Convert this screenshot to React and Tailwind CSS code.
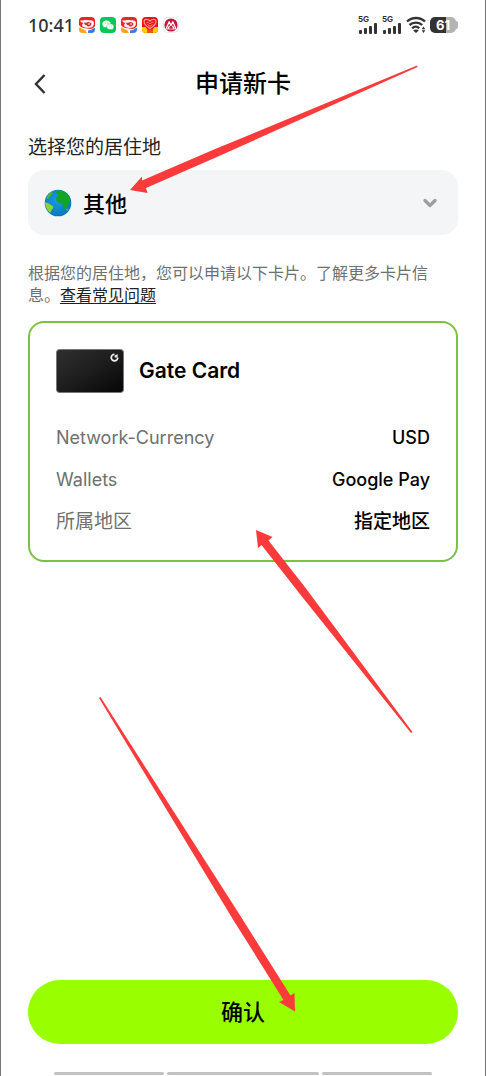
import { useState } from 'react';
import { ChevronDown } from 'lucide-react';

const REGIONS = ['其他'];

const CARD_DETAILS = [
    { label: 'Network-Currency', value: 'USD' },
    { label: 'Wallets', value: 'Google Pay' },
    { label: '所属地区', value: '指定地区', large: true },
];

function ShoppingIcon() {
    return (
        <svg viewBox="0 0 16 16" className="size-4">
            <rect width="16" height="16" rx="4" fill="#e3282b" />
            <path d="M0 8C2 11 5 11 8 11.500S13 13 16 9v3a4 4 0 0 1-4 4H4a4 4 0 0 1-4-4z" fill="#fff" />
            <path d="M0 10.500c2 0 4 2 6.500 3L8 16H4a4 4 0 0 1-4-4z" fill="#f9a51b" />
            <path d="M9 13.500c2 0 4-1 7-3V12a4 4 0 0 1-4 4H9z" fill="#3a7fd5" />
            <path d="M1 3.500c3 .2 4-.8 7-.5s4 0 6.500 1.200c1 1.800.4 4.800-1.500 6C10 11.500 5 11 3.500 9.500 2.500 8 3.500 6.500 4.500 6 3 6 1.500 5 1 3.500z" fill="#fbeeee" />
            <path d="M5 5.500c2 1 3-1 5-.5 1.500.5 2 1 2.500 2-.5 2-2 2.500-3.500 2.500-1 0-1-1.500-2-1.500S5.500 7.500 5 5.500z" fill="#c4393d" />
            <circle cx="10" cy="7" r=".8" fill="#fff" />
        </svg>
    );
}

function ChatIcon() {
    return (
        <svg viewBox="0 0 16 16" className="size-4">
            <rect width="16" height="16" rx="4" fill="#06c755" />
            <path d="M6.500 3.500c-2.400 0-4.200 1.500-4.200 3.400 0 1.100.6 2 1.500 2.600l-.4 1.300 1.600-.8c.5.100 1 .2 1.500.2 2.400 0 4.200-1.500 4.200-3.300S8.900 3.500 6.500 3.500z" fill="#fff" />
            <path d="M10.300 6.800c-2 0-3.600 1.300-3.600 2.900s1.600 2.900 3.600 2.900c.5 0 .9-.1 1.300-.2l1.300.7-.3-1.100c.8-.5 1.300-1.400 1.300-2.300 0-1.600-1.600-2.900-3.600-2.900z" fill="#fff" stroke="#06c755" strokeWidth=".5" />
            <g fill="#06c755">
                <circle cx="5.200" cy="6" r=".5" />
                <circle cx="7.900" cy="6" r=".5" />
                <circle cx="9.200" cy="9" r=".4" />
                <circle cx="11.500" cy="9" r=".4" />
            </g>
        </svg>
    );
}

function HeartIcon() {
    return (
        <svg viewBox="0 0 16 16" className="size-4">
            <rect width="16" height="16" rx="4" fill="#ee1111" />
            <path d="M0 10h3.500l2 2.500V16H4a4 4 0 0 1-4-4zM16 10h-3.500l-2 2.500V16H12a4 4 0 0 0 4-4z" fill="#fdd000" />
            <path d="M5 12.500h6V16H5z" fill="#e8590c" />
            <path d="M8 11.500C4 9 2 7 2 4.500 2 2 5.500 1.500 8 4c2.500-2.500 6-2 6 .5C14 7 12 9 8 11.500z" fill="none" stroke="#ff9d9d" strokeWidth="1.200" />
            <path d="M4.500 5.500c1.500-.5 2.500.5 3.500 1.500 1-1 2-2 3.500-1.500M5.500 7.500L8 9.300l2.500-1.800" fill="none" stroke="#ff9d9d" strokeWidth=".9" />
        </svg>
    );
}

function BankIcon() {
    return (
        <svg viewBox="0 0 16 16" className="size-4">
            <rect x=".5" y=".5" width="15" height="15" rx="4" fill="#fff" stroke="#f6e6ea" />
            <circle cx="8" cy="8" r="6.600" fill="#c8153c" />
            <path d="M3.300 11.200L6.200 4.800 8 8.500l1.800-3.700 2.900 6.400M5.300 11.300l1-2M10.700 11.300l-1-2" fill="none" stroke="#fff" strokeWidth="1.300" strokeLinecap="round" strokeLinejoin="round" />
            <path d="M3 12h10" stroke="#fff" strokeWidth=".8" />
        </svg>
    );
}

function Signal() {
    return (
        <div className="flex w-5 flex-col items-start">
            <span className="text-[8px] leading-[7px] font-bold">5G</span>
            <svg viewBox="0 0 20 11" className="h-[11px] w-5" fill="currentColor">
                <rect x="1" y="7" width="3" height="4" rx="1" />
                <rect x="6" y="5" width="3" height="6" rx="1" />
                <rect x="11" y="3" width="3" height="8" rx="1" />
                <rect x="16" y="0" width="3" height="11" rx="1" />
            </svg>
        </div>
    );
}

function StatusBar() {
    return (
        <div className="flex h-[50px] items-center justify-between text-[#333]">
            <div className="flex items-center gap-[5px]">
                <span className="font-[Noto_Sans,sans-serif] text-lg font-medium">10:41</span>
                <ShoppingIcon />
                <ChatIcon />
                <ShoppingIcon />
                <HeartIcon />
                <BankIcon />
            </div>
            <div className="flex items-center gap-1">
                <Signal />
                <Signal />
                <svg viewBox="0 0 20 18" className="h-[18px] w-5" fill="none" stroke="currentColor" strokeWidth="2.400">
                    <path d="M1 5.500C6 .8 14 .8 19 5.500M3.500 9C7 5.800 13 5.800 16.200 9M6.200 12.300c2-2 5-2 7 0" />
                    <path d="M10 17l-2.800-2.500c1.600-1.200 4-1.200 5.600 0z" fill="currentColor" stroke="none" />
                    <path d="M17.500 10.500l1.800 2.700h-3.600zM17.500 17l1.800-2.700h-3.600z" fill="currentColor" stroke="none" />
                </svg>
                <div className="flex items-center">
                    <div className="flex h-4 w-[26px] items-center justify-center rounded-[5px] bg-linear-to-r from-[#333] from-60% to-[#b3b3b3] to-60% text-[13px] leading-4 font-bold text-white">
                        61
                    </div>
                    <div className="h-2 w-0.5 rounded-r-sm bg-[#b3b3b3]" />
                </div>
            </div>
        </div>
    );
}

function Globe() {
    return (
        <svg viewBox="0 0 28 28" className="size-7">
            <defs>
                <radialGradient id="sea" cx=".45" cy=".4" r=".6">
                    <stop offset="0" stopColor="#199be2" />
                    <stop offset="1" stopColor="#0878bd" />
                </radialGradient>
            </defs>
            <circle cx="14" cy="14" r="13.300" fill="url(#sea)" />
            <path d="M12 3.500c1-1.500 3-2.500 5-2.300 4 1 7.500 4 9 7.600.5 2-.2 4.200-1.200 5.200-.5 2.500-2.300 5.500-4.300 6-1.500-.5-1-3-1.800-5-.8-1.200-2.700-.6-4.200-1.200-2-1-3-3-2.300-5 .3-1.300 1.800-1.800 2.300-2.800-.8-.8-2-1.500-2.500-2.500z" fill="#12a329" />
            <path d="M2.500 8.500C3.500 6 5.500 4 8 2.800c1 .6.500 2-.6 3C6.500 7.500 5.500 9 4 10c-1 .5-1.800-.3-1.500-1.500z" fill="#4db52f" />
            <path d="M1 13.500c1.800-.3 3.600.6 5 2 1.800.8 3.500 1.400 3.200 3-.6 1.800-2 2.500-2.200 4.200-.5 1-1.200 1-1.800.2-2.500-2.500-4-5.700-4.200-9.400z" fill="#8bd436" />
            <path d="M22 20.500c1 0 1.200-1 1.800-1.500l-.5 3z" fill="#7fd63a" />
        </svg>
    );
}

function BankCard() {
    return (
        <svg viewBox="0 0 68 44" className="h-11 w-[68px]">
            <defs>
                <linearGradient id="plate" x1="0" y1="0" x2="1" y2="1">
                    <stop offset="0" stopColor="#303030" />
                    <stop offset=".5" stopColor="#1d1d1d" />
                    <stop offset="1" stopColor="#050505" />
                </linearGradient>
            </defs>
            <rect x=".5" y=".5" width="67" height="43" rx="3" fill="url(#plate)" stroke="#777" />
            <path d="M58.500 5.300a3.300 3.300 0 1 0 3.300 3.300" fill="none" stroke="#eee" strokeWidth="1.700" />
            <path d="M58.600 8.600V6.800l3-1.800v3.600z" fill="#eee" />
        </svg>
    );
}

function Arrows() {
    return (
        <svg viewBox="0 0 486 1076" className="pointer-events-none absolute top-0 -left-px w-[calc(100%+2px)]" fill="#fb3b3b">
            <path d="M130 190L142 176.500v4L214.500 149.300 417 65.500l.5 1.500L217.500 156.700 146 188l1.500 5z" />
            <path d="M256 530l16.500 7-4 3.500L306 588.500 412.500 732l-1.500 1L299.500 593.500 261.500 545l-3.500 3z" />
            <path d="M295 1011.500l-16-9.500 4.500-2L233 919.400 99 698l1.500-1L240 915.200 290.500 995.500l4-2.500z" />
        </svg>
    );
}

export default function App() {
    const [region, setRegion] = useState(REGIONS[0]);

    return (
        <div className="relative flex min-h-screen flex-col border-x border-[#777] bg-white px-[27px] font-[Inter,'Noto_Sans_CJK_SC',sans-serif] text-black">
            <StatusBar />

            <header className="grid h-[68px] grid-cols-[28px_1fr_28px] items-center">
                <button type="button" aria-label="返回" className="flex h-10 items-center pl-1.5 text-[#333]">
                    <svg viewBox="0 0 12 20" className="h-5 w-3" fill="none" stroke="currentColor" strokeWidth="2.500">
                        <path d="M10.500 1L2 10l8.500 9" />
                    </svg>
                </button>
                <h1 className="text-center text-2xl font-medium">申请新卡</h1>
            </header>

            <main>
                <label htmlFor="region" className="mt-[18px] block text-[19px] leading-6 text-[#222]">
                    选择您的居住地
                </label>
                <div className="mt-[10px] grid items-center">
                    <select
                        id="region"
                        value={region}
                        onChange={(e) => setRegion(e.target.value)}
                        className="col-start-1 row-start-1 h-[65px] w-full appearance-none rounded-2xl bg-[#f3f5f7] pt-1 pl-[55px] text-[22px] font-medium"
                    >
                        {REGIONS.map((name) => (
                            <option key={name}>{name}</option>
                        ))}
                    </select>
                    <div className="pointer-events-none col-start-1 row-start-1 flex items-center justify-between pr-[18px] pl-4">
                        <Globe />
                        <ChevronDown size={20} strokeWidth={4} className="text-[#9b9fa0]" />
                    </div>
                </div>

                <p className="mt-[27px] text-base leading-[22px] text-[#6e7071]">
                    根据您的居住地，您可以申请以下卡片。了解更多卡片信息。
                    <a href="#faq" className="text-[#222] underline underline-offset-2">查看常见问题</a>
                </p>

                <section className="mt-[15px] rounded-2xl border-2 border-[#7dc142] px-[26px] pt-[26px] pb-[17px]">
                    <div className="flex items-center gap-[15px]">
                        <BankCard />
                        <h2 className="text-[21px] font-semibold">Gate Card</h2>
                    </div>
                    <dl className="mt-6 text-lg leading-[42px]">
                        {CARD_DETAILS.map((item) => (
                            <div key={item.label} className={`flex justify-between ${item.large ? 'text-[19px]' : ''}`}>
                                <dt className="text-[#6e7071]">{item.label}</dt>
                                <dd className="font-medium">{item.value}</dd>
                            </div>
                        ))}
                    </dl>
                </section>
            </main>

            <footer className="mt-auto pb-px">
                <button type="button" className="h-16 w-full rounded-full bg-[#99ff00] text-[22px] font-medium">
                    确认
                </button>
                <div className="mt-7 grid grid-cols-[110fr_152fr_110fr] gap-[3px] px-[26px]">
                    <div className="h-[3px] rounded-full bg-[#c2c2c2]" />
                    <div className="h-[3px] rounded-full bg-[#c2c2c2]" />
                    <div className="h-[3px] rounded-full bg-[#c2c2c2]" />
                </div>
            </footer>

            <Arrows />
        </div>
    );
}
